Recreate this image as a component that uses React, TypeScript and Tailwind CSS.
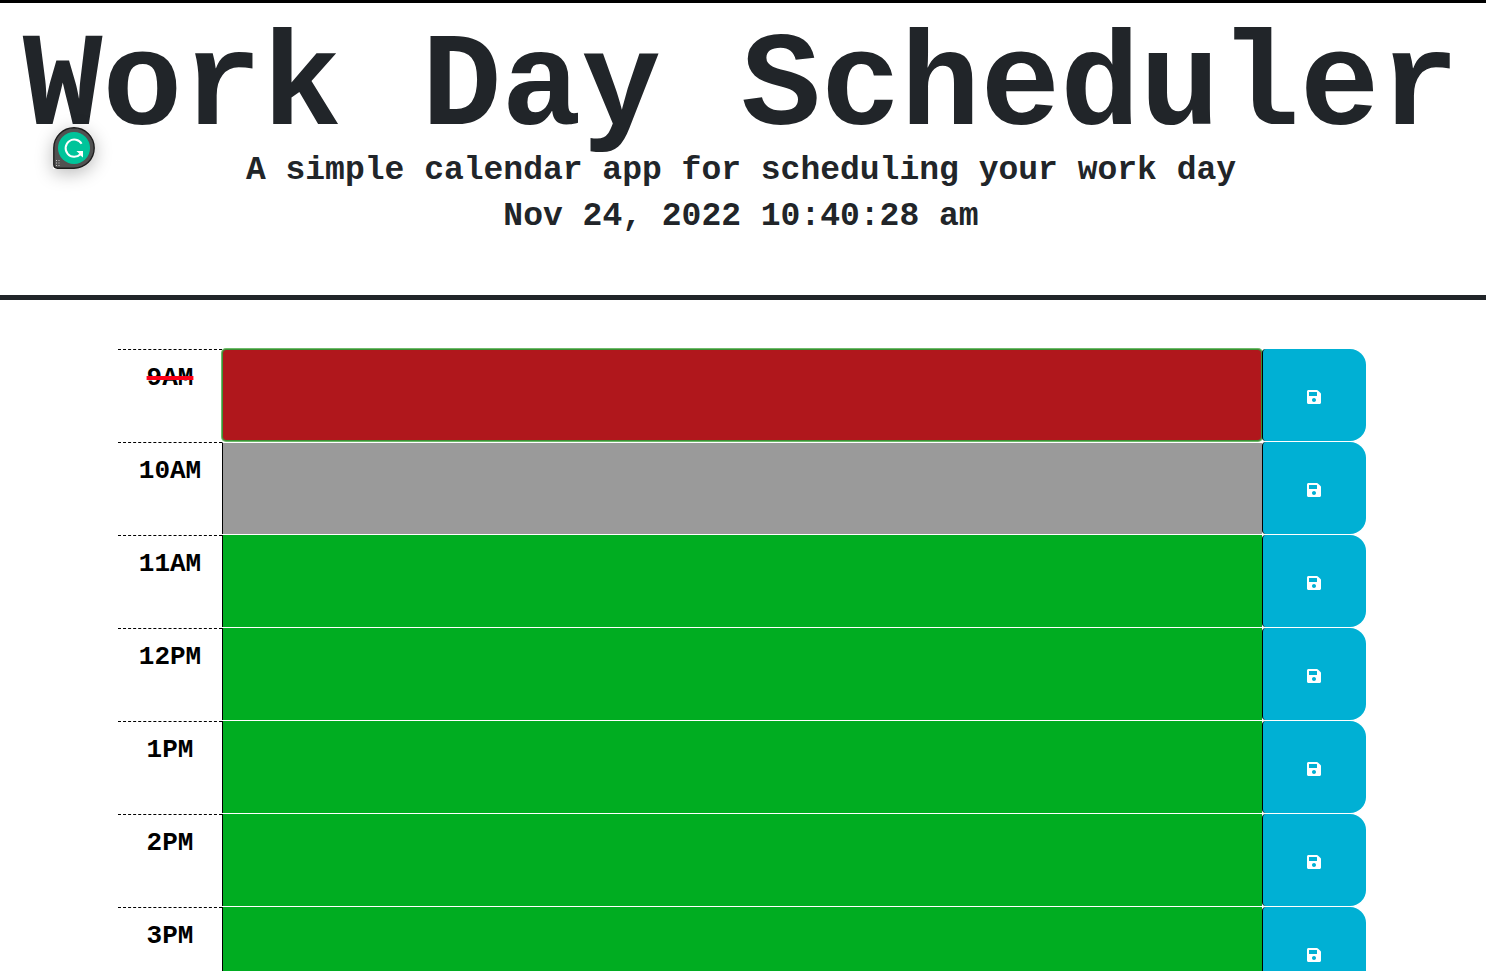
import { FaSave } from "react-icons/fa";

type Slot = { label: string; state: "past" | "present" | "future" };

const slots: Slot[] = [
  { label: "9AM", state: "past" },
  { label: "10AM", state: "present" },
  { label: "11AM", state: "future" },
  { label: "12PM", state: "future" },
  { label: "1PM", state: "future" },
  { label: "2PM", state: "future" },
  { label: "3PM", state: "future" },
];

const fieldStyles = {
  past: "rounded-sm border border-[#3c8f35] bg-[#b0171c] ring-1 ring-[#6dbb69]",
  present: "border-t border-l border-t-white border-l-black bg-[#9a9a9a]",
  future: "border-l border-black bg-[#00ad21]",
};

function AssistantBadge() {
  return (
    <button
      type="button"
      aria-label="Writing assistant"
      className="absolute top-[124px] left-[53px] size-[42px] rounded-full rounded-bl-[4px] shadow-[0_4px_18px_rgba(0,0,0,0.28)]"
    >
      <svg viewBox="0 0 42 42" className="block size-full" aria-hidden="true">
        <path
          d="M21 .8A20.2 20.2 0 1 1 21 41.2H4.5Q.8 41.2 .8 37.5V21A20.2 20.2 0 0 1 21 .8Z"
          fill="#515151"
          stroke="#1c1c1c"
          strokeWidth="1.4"
        />
        <circle cx="21" cy="21" r="16" fill="#00c49a" />
        <path
          d="M28.6 16.8A8.6 8.6 0 1 0 27.4 27.2L29 25"
          fill="none"
          stroke="#fff"
          strokeWidth="2"
        />
        <path d="M23.4 24H30V30.6L27.8 28.8L25.6 26Z" fill="#fff" />
        <g fill="#c8c8c8">
          <path d="M3 33h1v1H3zM5.5 33h1v1h-1zM3 35.5h1v1H3zM5.5 35.5h1v1h-1zM3 38h1v1H3zM5.5 38h1v1h-1z" />
        </g>
      </svg>
    </button>
  );
}

function TimeRow({ label, state }: Slot) {
  const id = `slot-${label}`;
  return (
    <div className="grid h-[93px] grid-cols-[1fr_10fr_1fr]">
      <label
        htmlFor={id}
        className="border-t border-dashed border-black pt-[14px] text-center text-[26px] leading-7 font-bold text-black"
      >
        <span
          className={
            state === "past"
              ? "line-through decoration-[#ff0018] decoration-4"
              : ""
          }
        >
          {label}
        </span>
      </label>
      <textarea
        id={id}
        className={`block h-[92px] w-full resize-none p-2 text-white outline-none ${fieldStyles[state]}`}
      />
      <button
        type="button"
        aria-label={`Save ${label}`}
        className="flex h-[92px] items-center justify-center rounded-l-sm rounded-r-2xl border-l border-black bg-[#00b0d4] pt-1 pr-px text-base text-white"
      >
        <FaSave />
      </button>
    </div>
  );
}

export default function App() {
  return (
    <div className="overflow-x-hidden bg-white font-['Liberation_Mono',monospace] text-[#212529]">
      <header className="relative border-t-[3px] border-b-[5px] border-t-black border-b-[#212529] pt-[22px] pr-1 pb-[59px] text-center font-bold">
        <h1 className="text-[133px] leading-[128px] whitespace-nowrap">
          Work Day Scheduler
        </h1>
        <p className="text-[33px] leading-9">
          A simple calendar app for scheduling your work day
        </p>
        <p className="mt-2 text-[33px] leading-[39px]">
          Nov 24, 2022 10:40:28 am
        </p>
        <AssistantBadge />
      </header>
      <main className="mt-[49px] pr-[120px] pl-[118px]">
        {slots.map((slot) => (
          <TimeRow key={slot.label} {...slot} />
        ))}
      </main>
    </div>
  );
}
